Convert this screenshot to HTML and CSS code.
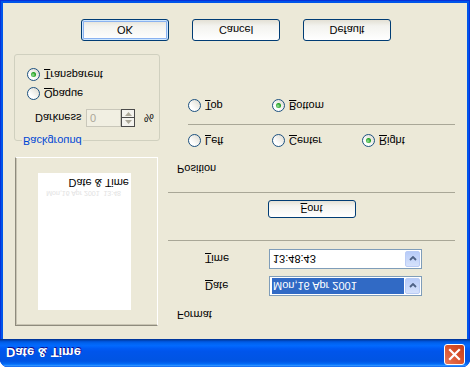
FILE: index.html
```html
<!DOCTYPE html>
<html lang="en">
<head>
    <meta charset="UTF-8">
    <title>Date &amp; Time</title>
    <link rel="stylesheet" href="styles.css">
</head>
<body>
    <div class="window">
        <div class="titlebar">
            <span class="title">Date &amp; Time</span>
            <button class="close-btn">
                <svg width="13" height="13" viewBox="0 0 13 13"><path d="M2 2 L11 11 M11 2 L2 11" stroke="#fff" stroke-width="2.2" stroke-linecap="square"/></svg>
            </button>
        </div>
        <div class="client">
            <div class="main">
                <div class="left">
                    <div class="preview">
                        <div class="paper">
                            <span class="paper-date">Mon,16 Apr 2001&nbsp; 13:48</span>
                            <span class="paper-title">Date &amp; Time</span>
                        </div>
                    </div>
                    <div class="group">
                        <div class="group-label">Background</div>
                        <div class="darkness-row">
                            <span class="darkness-label">Darkness</span>
                            <span class="spin-input">0</span>
                            <span class="spin">
                                <span class="spin-btn"><svg width="7" height="4" viewBox="0 0 7 4"><path d="M0 4 L3.5 0 L7 4Z" fill="#ACA899"/></svg></span>
                                <span class="spin-btn"><svg width="7" height="4" viewBox="0 0 7 4"><path d="M0 0 L3.5 4 L7 0Z" fill="#ACA899"/></svg></span>
                            </span>
                            <span class="percent">%</span>
                        </div>
                        <label class="radio opaque"><span class="radio-circle"></span><span><u>O</u>paque</span></label>
                        <label class="radio transparent checked"><span class="radio-circle"></span><span><u>T</u>ransparent</span></label>
                    </div>
                </div>
                <div class="right">
                    <div class="section-title">Format</div>
                    <div class="field-row">
                        <span class="field-label"><u>D</u>ate</span>
                        <div class="combo">
                            <span class="combo-value selected">Mon,16 Apr 2001</span>
                            <span class="combo-arrow"><svg width="8" height="5" viewBox="0 0 8 5"><path d="M1 1 L4 4 L7 1" fill="none" stroke="#4D6185" stroke-width="1.8"/></svg></span>
                        </div>
                    </div>
                    <div class="field-row">
                        <span class="field-label"><u>T</u>ime</span>
                        <div class="combo">
                            <span class="combo-value">13:48:43</span>
                            <span class="combo-arrow"><svg width="8" height="5" viewBox="0 0 8 5"><path d="M1 1 L4 4 L7 1" fill="none" stroke="#4D6185" stroke-width="1.8"/></svg></span>
                        </div>
                    </div>
                    <div class="divider"></div>
                    <div class="font-row">
                        <button class="btn btn-small"><u>F</u>ont</button>
                    </div>
                    <div class="divider divider-font"></div>
                    <div class="section-title section-position">Position</div>
                    <div class="radio-row">
                        <label class="radio"><span class="radio-circle"></span><span><u>L</u>eft</span></label>
                        <label class="radio"><span class="radio-circle"></span><span><u>C</u>enter</span></label>
                        <label class="radio checked"><span class="radio-circle"></span><span><u>R</u>ight</span></label>
                    </div>
                    <div class="divider divider-inner"></div>
                    <div class="radio-row radio-row-last">
                        <label class="radio"><span class="radio-circle"></span><span><u>T</u>op</span></label>
                        <label class="radio checked"><span class="radio-circle"></span><span><u>B</u>ottom</span></label>
                    </div>
                </div>
            </div>
            <div class="buttons">
                <button class="btn btn-default">OK</button>
                <button class="btn">Cancel</button>
                <button class="btn">Default</button>
            </div>
        </div>
    </div>
</body>
</html>
```

FILE: styles.css
```css
body {
    margin: 0;
    background: #fff;
    font-family: 'Liberation Sans', Arial, sans-serif;
    font-size: 11px;
    color: #000;
}
/* the whole dialog is shown mirrored top-to-bottom */
.window {
    width: 470px;
    height: 367px;
    display: flex;
    flex-direction: column;
    background: #0055EA;
    border-radius: 8px 8px 0 0;
    box-shadow: inset 1px 0 #0831D9, inset -1px 0 #0831D9, inset 0 -1px #0831D9;
    overflow: hidden;
    transform: scaleY(-1);
}
.titlebar {
    height: 28px;
    display: flex;
    align-items: flex-start;
    padding: 0 5px 0 6px;
    background: linear-gradient(to bottom, #0058EE 0%, #3593FF 4%, #288EFF 6%, #127DFF 8%, #036FFC 10%, #0262EE 14%, #0057E5 20%, #0054E3 24%, #0055EB 56%, #005BF5 66%, #026AFE 76%, #0062EF 86%, #0052D6 92%, #0040AB 96%, #003092 100%);
}
.title {
    flex: 1;
    margin-top: 7px;
    font-weight: bold;
    font-size: 13px;
    line-height: 15px;
    color: #fff;
    text-shadow: 1px 1px #0F1089;
}
.close-btn {
    margin-top: 2px;
    width: 21px;
    height: 21px;
    padding: 0;
    display: flex;
    align-items: center;
    justify-content: center;
    border: 1px solid #fff;
    border-radius: 3px;
    background: linear-gradient(135deg, #E9785A, #D8512B 55%, #C4401C);
}
.client {
    flex: 1;
    margin: 0 3px 3px;
    background: #ECE9D8;
    display: flex;
    flex-direction: column;
}
.main {
    display: flex;
}
.left {
    width: 146px;
    margin-left: 11px;
}
.right {
    width: 287px;
    margin-left: 8px;
}
.preview {
    margin: 13px 0 0 1px;
    width: 143px;
    height: 169px;
    box-sizing: border-box;
    border: 1px solid;
    border-color: #8E8B7D #fff #fff #8E8B7D;
    box-shadow: inset 1px 1px #C9C5B4;
    padding: 15px 0 0 22px;
}
.paper {
    width: 93px;
    height: 137px;
    box-sizing: border-box;
    background: #fff;
    display: flex;
    flex-direction: column;
    justify-content: flex-end;
    align-items: flex-end;
    padding: 0 2px 3px 0;
}
.paper-date {
    font-size: 7px;
    line-height: 8px;
    color: #E2E2E2;
    padding-right: 8px;
}
.paper-title {
    line-height: 13px;
}
.group {
    margin-top: 16px;
    border: 1px solid #D0D0BF;
    border-radius: 3px;
    padding-bottom: 13px;
}
.group-label {
    width: fit-content;
    margin: -7px 0 0 7px;
    padding: 0 1px;
    line-height: 13px;
    background: #ECE9D8;
    color: #0046D5;
}
.darkness-row {
    display: flex;
    align-items: center;
    height: 18px;
    margin-top: 7px;
}
.darkness-label {
    width: 51px;
    margin-left: 20px;
}
.spin-input {
    width: 35px;
    height: 18px;
    box-sizing: border-box;
    border: 1px solid #C9C7BA;
    background: #F1EFE2;
    color: #ACA899;
    line-height: 16px;
    padding-left: 3px;
}
.spin {
    width: 14px;
    height: 18px;
    box-sizing: border-box;
    border: 1px solid #4A4A4A;
    display: flex;
    flex-direction: column;
    background: #F4F3EE;
}
.spin-btn {
    flex: 1;
    display: flex;
    align-items: center;
    justify-content: center;
}
.spin-btn + .spin-btn {
    border-top: 1px solid #4A4A4A;
}
.percent {
    margin-left: 9px;
}
.radio {
    display: flex;
    align-items: center;
    gap: 4px;
    height: 13px;
    line-height: 13px;
}
.radio-circle {
    width: 13px;
    height: 13px;
    box-sizing: border-box;
    border-radius: 50%;
    border: 1px solid #1C5180;
    background: linear-gradient(135deg, #fff 30%, #DCD9CE);
    display: flex;
    align-items: center;
    justify-content: center;
}
.checked .radio-circle::after {
    content: '';
    width: 5px;
    height: 5px;
    border-radius: 50%;
    background: radial-gradient(circle at 40% 40%, #9EE29E, #21A121 60%, #1A861A);
}
.group .radio {
    margin-left: 12px;
}
.opaque {
    margin-top: 9px;
}
.transparent {
    margin-top: 6px;
}
.section-title {
    margin: 18px 0 0 9px;
    line-height: 13px;
}
.section-position {
    margin-top: 17px;
}
.field-row {
    display: grid;
    grid-template-columns: 101px 153px;
    align-items: center;
    margin-top: 12px;
}
.field-row + .field-row {
    margin-top: 7px;
}
.field-label {
    padding-left: 37px;
}
.combo {
    height: 20px;
    box-sizing: border-box;
    border: 1px solid #7F9DB9;
    background: #fff;
    display: flex;
    gap: 1px;
    padding: 1px 1px 1px 2px;
}
.combo-value {
    flex: 1;
    height: 16px;
    line-height: 16px;
    padding-left: 1px;
}
.combo-value.selected {
    background: #316AC5;
    color: #fff;
}
.combo-arrow {
    width: 15px;
    height: 16px;
    box-sizing: border-box;
    border: 1px solid #BACCF6;
    border-radius: 2px;
    background: linear-gradient(#D6E2FC, #B7CBF8);
    display: flex;
    align-items: center;
    justify-content: center;
}
.divider {
    border-top: 1px solid #A9A797;
    margin-top: 8px;
}
.divider-font {
    margin-top: 7px;
}
.divider-inner {
    margin: 9px 0 0 20px;
}
.font-row {
    margin-top: 22px;
    display: flex;
    justify-content: center;
}
.radio-row {
    display: flex;
    padding-left: 20px;
    margin-top: 15px;
}
.radio-row .radio {
    width: 84px;
}
.radio-row .radio + .radio {
    width: 90px;
}
.radio-row-last {
    margin-top: 12px;
}
.buttons {
    display: flex;
    gap: 23px;
    margin-top: 13px;
    padding-left: 78px;
}
.btn {
    width: 88px;
    height: 22px;
    padding: 0;
    font-family: 'Liberation Sans', Arial, sans-serif;
    font-size: 11px;
    color: #000;
    border: 1px solid #003C74;
    border-radius: 3px;
    background: linear-gradient(#FFFFFF, #F3F3EF 70%, #E3E0D5);
}
.btn-small {
    height: 18px;
}
.btn-default {
    box-shadow: inset 0 0 0 1px #CEE7FF, inset 0 0 0 2px #8AB2F0;
}
```
